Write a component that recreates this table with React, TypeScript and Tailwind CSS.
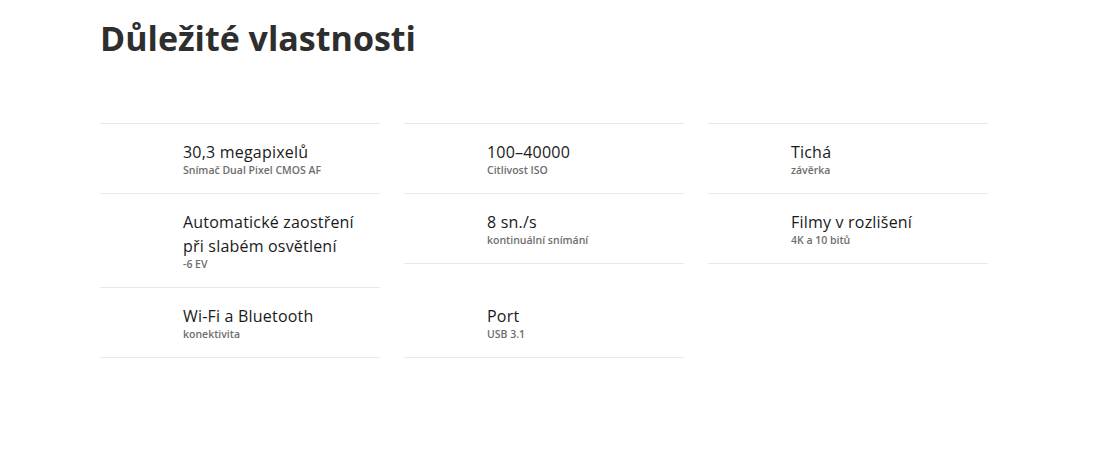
import React from 'react';

type Feature = { title: string[]; sub: string };

// rows are laid out in a grid so that row 3 lines up across columns
const features: (Feature | null)[] = [
  { title: ['30,3 megapixelů'], sub: 'Snímač Dual Pixel CMOS AF' },
  { title: ['100–40000'], sub: 'Citlivost ISO' },
  { title: ['Tichá'], sub: 'závěrka' },
  { title: ['Automatické zaostření', 'při slabém osvětlení'], sub: '-6 EV' },
  { title: ['8 sn./s'], sub: 'kontinuální snímání' },
  { title: ['Filmy v rozlišení'], sub: '4K a 10 bitů' },
  { title: ['Wi-Fi a Bluetooth'], sub: 'konektivita' },
  { title: ['Port'], sub: 'USB 3.1' },
  null,
];

function FeatureCell({ f, first }: { f: Feature; first: boolean }) {
  return (
    <div
      className={
        'border-b border-[#e9e9e9] pl-[83px] pt-[16px] pb-[16px] ' + (first ? 'border-t' : '')
      }
    >
      <div className="text-[16px] leading-[24px] text-[#1a1a1a] tracking-[0.2px]">
        {f.title.map((t) => (
          <div key={t}>{t}</div>
        ))}
      </div>
      <div className="text-[10.5px] leading-[13px] text-[#6e6e6e] font-semibold">{f.sub}</div>
    </div>
  );
}

export default function App() {
  return (
    <div className="min-h-[450px] w-full bg-white font-['Open_Sans',sans-serif] text-[#333]">
      <div className="pl-[100px] pt-[15px]">
        <h1 className="text-[34px] leading-[46px] font-bold text-[#2e2e2e]">
          Důležité vlastnosti
        </h1>
        <div className="mt-[62px] grid w-[888px] grid-cols-3 gap-x-6 items-start">
          {features.map((f, i) =>
            f ? <FeatureCell key={i} f={f} first={i < 3} /> : <div key={i} />
          )}
        </div>
      </div>
    </div>
  );
}
